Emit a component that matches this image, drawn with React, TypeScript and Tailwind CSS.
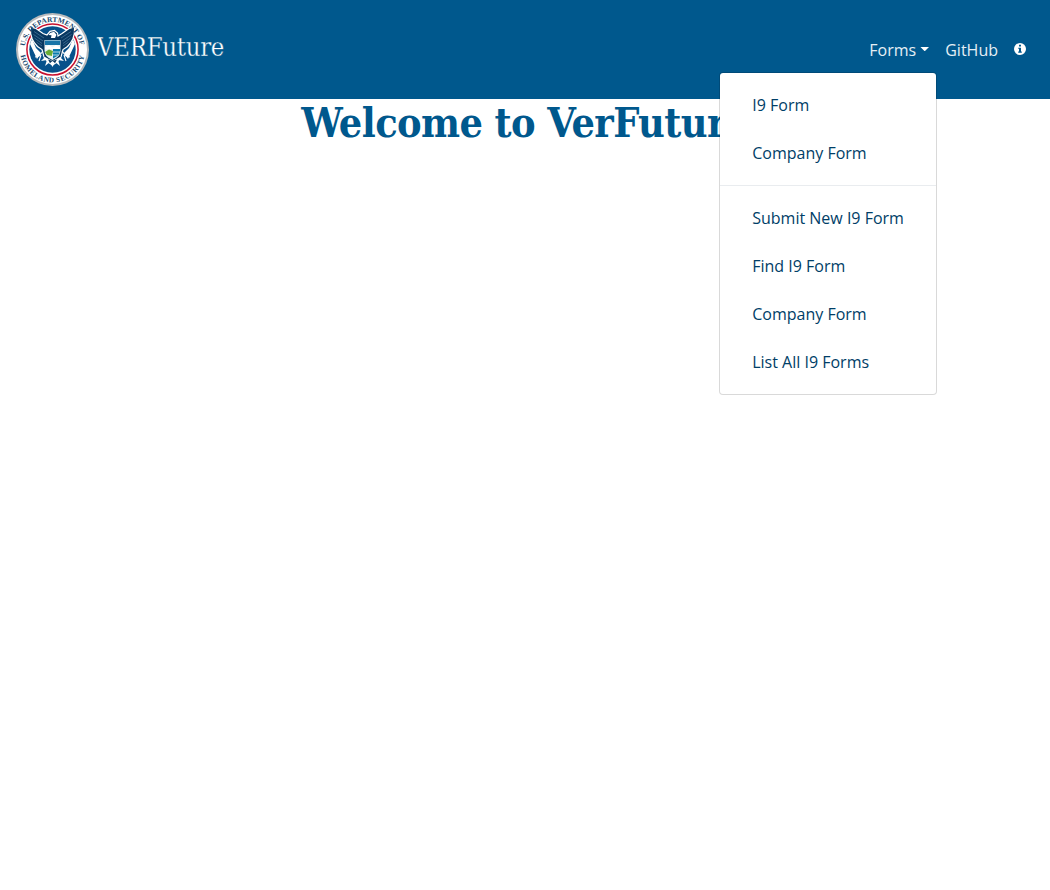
import React from "react";

function Seal() {
  return (
    <svg width="73" height="73" viewBox="0 0 73 73" className="block shrink-0" role="img">
      <defs>
        <path id="seal-top" d="M 9 33.2 A 27.7 27.7 0 0 1 64 33.2" />
        <path id="seal-bottom" d="M 4.5 41.5 A 32.3 32.3 0 0 0 68.5 41.5" />
      </defs>
      <circle cx="36.5" cy="36.5" r="36.5" fill="#b9bbbd" />
      <circle cx="36.5" cy="36.5" r="34.5" fill="#fff" />
      <circle cx="36.5" cy="36.5" r="25.6" fill="#fff" stroke="#c8102e" strokeWidth="1.5" />
      <circle cx="36.5" cy="36.5" r="23.2" fill="#07518b" />
      <path d="M14 31 L16 26 L20 35 L25 40 L21 46 Z M59 31 L57 26 L53 35 L48 40 L52 46 Z" fill="#fff" />
      <path
        d="M14.4 14.2 L20 15.5 L27 20.5 L31 22 L34 18.3 L38.5 17.5 L41.5 20 L42 23 L46 20.5 L53 15.5 L58.6 14.2 L58.3 21 L56.8 26 L54.5 30 L51.5 33.5 L47 36.5 L45 44 L41 49 L36.5 52 L32 49 L28 44 L26 36.5 L21.5 33.5 L18.5 30 L16.2 26 L14.7 21 Z"
        fill="#083760"
        stroke="#fff"
        strokeWidth="1.2"
      />
      <path
        d="M18 18.5 L28 25 M17.5 21.5 L27 28 M18.5 25 L26 30.5 M20.5 29 L26 33 M55 18.5 L45 25 M55.5 21.5 L46 28 M54.5 25 L47 30.5 M52.5 29 L47 33"
        stroke="#6b97b8"
        strokeWidth=".5"
      />
      <path d="M34 20 L38 18.8 L40.5 21.8 L39 25 L35 25 L35.5 22.2 L32.5 22 Z" fill="#fff" />
      <path d="M28.5 27 H44.5 V38 Q44 44 36.5 47 Q29 44 28.5 38 Z" fill="#e9f3f6" />
      <path d="M29 27.5 H44 V32 H29 Z" fill="#1674a8" />
      <path d="M29 34.5 L33 32 L36.5 34.5 L40 32 L44 34.5 V36 H29 Z" fill="#fff" />
      <path d="M29 39 L33 36.5 L37 38 L36 43 L31 42 Z" fill="#69ac36" />
      <path d="M37 36 H44.5 L43 42 L37 45.5 Z" fill="#087bad" />
      <path d="M37 39 H44 M36 42 H43" stroke="#fff" strokeWidth=".7" />
      <path d="M27 38 L23 43 L19 44 M25 41 L20 41 M25 42 L23 48 M46 38 L50 43 L54 44 M48 41 L53 41 M48 42 L50 48" stroke="#fff" strokeWidth="1.1" fill="none" />
      <path d="M29 44 L25 48 L31 47 L29 53 L34 49 L36.5 54 L39 49 L44 53 L42 47 L48 48 L44 44 L36.5 48 Z" fill="#fff" />
      <path d="M32 46.5 L34 50 L36.5 48 L39 50 L41 46.5 L36.5 48 Z" fill="#083760" />
      <text fill="#17476d" className="text-[7.2px] font-bold [font-family:'Liberation_Serif',serif]">
        <textPath href="#seal-top" startOffset="0" textLength="79" lengthAdjust="spacingAndGlyphs">U.S. DEPARTMENT OF</textPath>
      </text>
      <text fill="#17476d" className="text-[7.2px] font-bold [font-family:'Liberation_Serif',serif]">
        <textPath href="#seal-bottom" startOffset="1" textLength="90" lengthAdjust="spacing">HOMELAND SECURITY</textPath>
      </text>
    </svg>
  );
}

function InfoIcon() {
  return (
    <svg width="12" height="12" viewBox="0 0 12 12" className="mb-0.5 block">
      <circle cx="6" cy="6" r="6" fill="white" />
      <path d="M5 1.8h2v1.7H5z M4.2 4.7H7v3.8h.8v1.2H4.2V8.5H5V5.8h-.8z" fill="#00588d" />
    </svg>
  );
}

function MenuItem({ children }: { children: React.ReactNode }) {
  return <a href="#" className="block px-8 py-3 whitespace-nowrap">{children}</a>;
}

export default function App() {
  return (
    <div className="min-h-[890px] bg-white text-base leading-6 [font-family:'Open_Sans',sans-serif]">
      <nav className="flex h-[99px] items-center justify-between bg-[#00588d] px-4 text-white">
        <a href="#" className="flex items-center gap-2">
          <Seal />
          <span className="mb-[5px] inline-block w-[130px] whitespace-nowrap text-[25.5px] leading-8 tracking-[-0.3px] [-webkit-text-stroke:0.3px_#00588d] [font-family:'DejaVu_Serif_Condensed','DejaVu_Serif',serif] [font-stretch:condensed]">VERFuture</span>
        </a>
        <div className="flex items-center text-[#e6eff5]">
          <div className="relative px-2">
            <a href="#" className="flex items-center">
              Forms
              <span className="mb-px ml-1 h-[4.5px] w-[9px] bg-white [clip-path:polygon(0_0,100%_0,50%_100%)]" />
            </a>
            <div className="absolute top-[34px] right-0 z-10 w-[218px] rounded border border-black/15 bg-white bg-clip-padding py-2 text-[#003e67]">
              <MenuItem>I9 Form</MenuItem>
              <MenuItem>Company Form</MenuItem>
              <div className="my-2 h-px bg-[#e9ecef]" />
              <MenuItem>Submit New I9 Form</MenuItem>
              <MenuItem>Find I9 Form</MenuItem>
              <MenuItem>Company Form</MenuItem>
              <MenuItem>List All I9 Forms</MenuItem>
            </div>
          </div>
          <a href="#" className="px-2">GitHub</a>
          <a href="#" className="px-2"><InfoIcon /></a>
        </div>
      </nav>
      <h1 className="flex h-12 justify-center whitespace-nowrap text-[41px] leading-[48px] font-bold tracking-[-0.6px] text-[#00588d] [font-family:'DejaVu_Serif_Condensed','DejaVu_Serif',serif] [font-stretch:condensed]">Welcome to VerFuture</h1>
    </div>
  );
}
